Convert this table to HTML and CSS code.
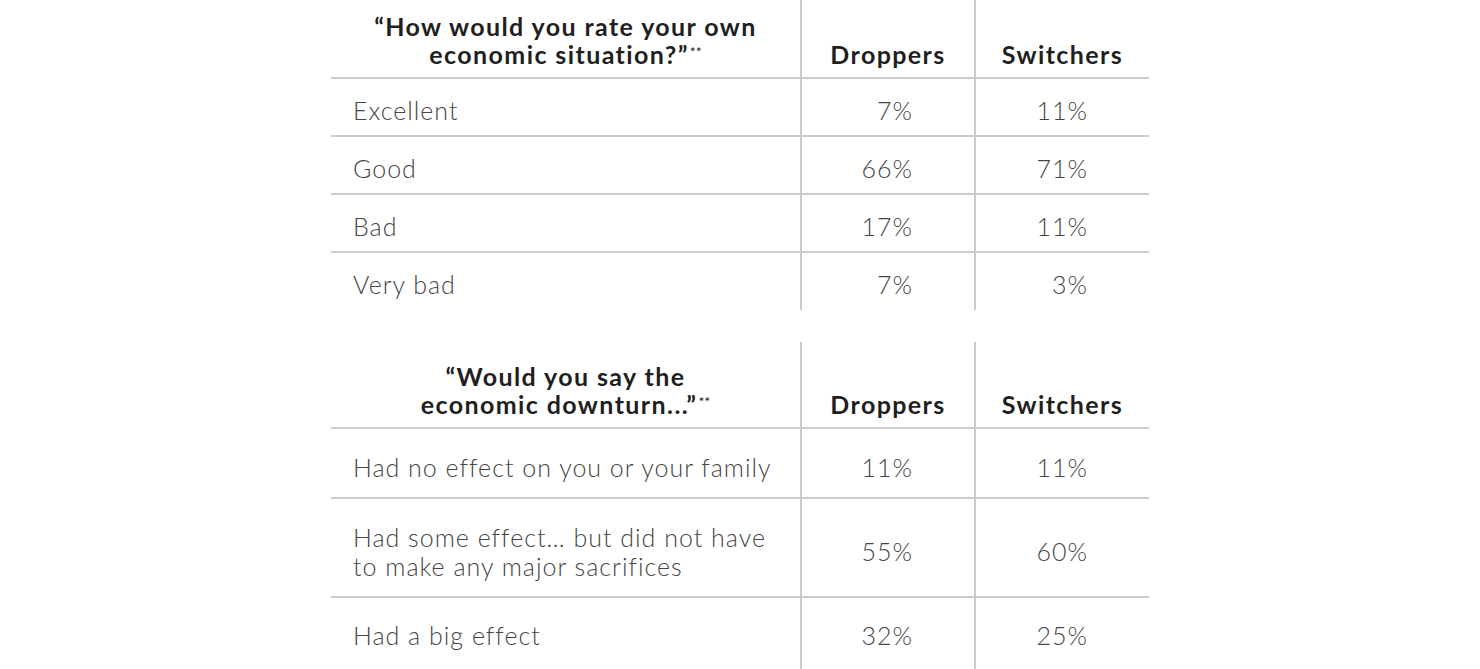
FILE: index.html
```html
<!DOCTYPE html>
<html>
<head>
<meta charset="utf-8">
<link rel="stylesheet" href="styles.css">
</head>
<body>
<div class="page">
  <div class="tbl tbl-a">
    <div class="cell head q"><span>“How would you rate your own<br>economic situation?”<sup>**</sup></span></div>
    <div class="cell head col"><span>Droppers</span></div>
    <div class="cell head col"><span>Switchers</span></div>

    <div class="cell lab"><span>Excellent</span></div>
    <div class="cell num"><span>7%</span></div>
    <div class="cell num"><span>11%</span></div>

    <div class="cell lab"><span>Good</span></div>
    <div class="cell num"><span>66%</span></div>
    <div class="cell num"><span>71%</span></div>

    <div class="cell lab"><span>Bad</span></div>
    <div class="cell num"><span>17%</span></div>
    <div class="cell num"><span>11%</span></div>

    <div class="cell lab last"><span>Very bad</span></div>
    <div class="cell num last"><span>7%</span></div>
    <div class="cell num last"><span>3%</span></div>
  </div>

  <div class="tbl tbl-b">
    <div class="cell head q"><span>“Would you say the<br>economic downturn...”<sup>**</sup></span></div>
    <div class="cell head col"><span>Droppers</span></div>
    <div class="cell head col"><span>Switchers</span></div>

    <div class="cell lab"><span>Had no effect on you or your family</span></div>
    <div class="cell num"><span>11%</span></div>
    <div class="cell num"><span>11%</span></div>

    <div class="cell lab"><span>Had some effect… but did not have<br>to make any major sacrifices</span></div>
    <div class="cell num"><span>55%</span></div>
    <div class="cell num"><span>60%</span></div>

    <div class="cell lab last"><span>Had a big effect</span></div>
    <div class="cell num last"><span>32%</span></div>
    <div class="cell num last"><span>25%</span></div>
  </div>
</div>
</body>
</html>
```

FILE: styles.css
```css
html, body {
  margin: 0;
  padding: 0;
  background: #ffffff;
}

body {
  font-family: "Lato", "Liberation Sans", sans-serif;
  overflow: hidden;
}

.page {
  padding-left: 331px;
  display: flex;
  flex-direction: column;
  gap: 32px;
}

.tbl {
  display: grid;
  grid-template-columns: 469px 174px 175px;
  width: 818px;
}

.tbl-a {
  grid-template-rows: 79px 58px 58px 58px 57px;
}

.tbl-b {
  grid-template-rows: 87px 70px 99px 72px;
}

.cell {
  box-sizing: border-box;
  border-bottom: 2px solid #cbcbcb;
  display: flex;
  align-items: center;
}

.cell.last {
  border-bottom: none;
}

.cell:not(.q):not(.lab) {
  border-left: 2px solid #cbcbcb;
}

.head {
  font-weight: 700;
  color: #1f1f1f;
  font-size: 25px;
  line-height: 28px;
  letter-spacing: 1.4px;
  align-items: flex-end;
  justify-content: center;
  text-align: center;
  padding-bottom: 9px;
}

.head sup {
  font-size: 14px;
  font-weight: 400;
  line-height: 0;
  vertical-align: 7px;
  letter-spacing: 0;
  margin-left: 1px;
}

.lab,
.num {
  font-weight: 300;
  color: #454545;
  font-size: 25px;
  line-height: 29px;
  letter-spacing: 1px;
  padding-top: 6px;
}

.lab {
  padding-left: 22px;
}

.num {
  justify-content: flex-end;
  padding-right: 61px;
}

.tbl-b .lab,
.tbl-b .num {
  padding-top: 8px;
}

.tbl-b .last {
  padding-top: 2px;
}
```
